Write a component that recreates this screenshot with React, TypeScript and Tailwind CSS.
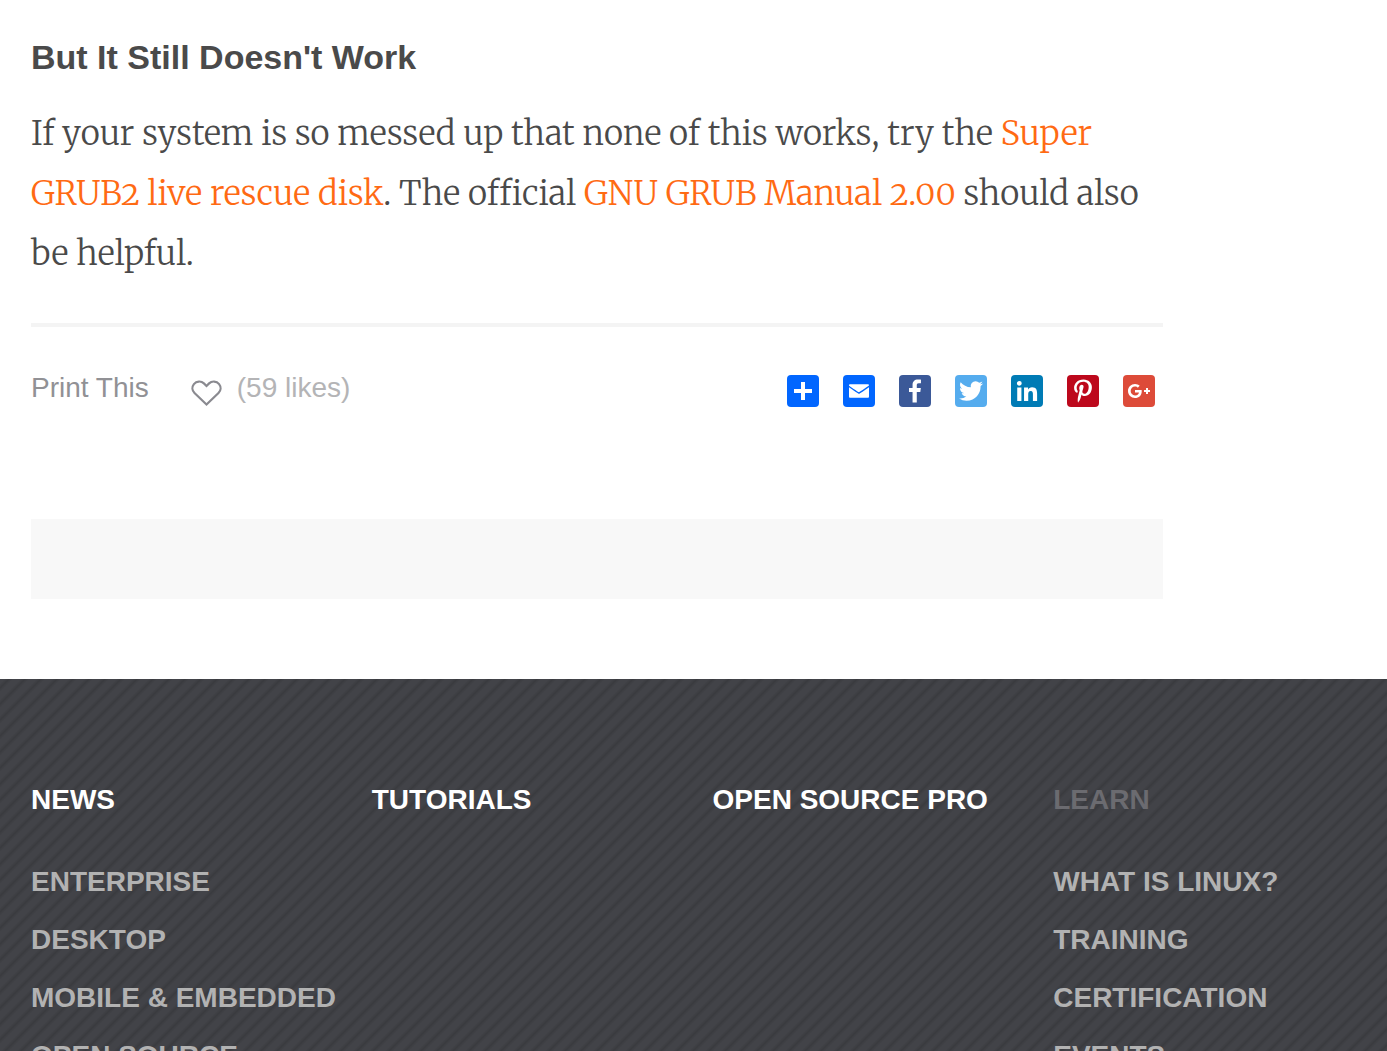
const shareLinks = [
  { label: "Share", bg: "bg-[#0166ff]", d: "M14 7h4v18h-4z M7 14h18v4H7z" },
  {
    label: "Email",
    bg: "bg-[#0166ff]",
    d: "M26 21.25v-9s-9.1 6.35-9.984 6.68C15.144 18.616 6 12.25 6 12.25v9c0 1.25.266 1.5 1.5 1.5h17c1.266 0 1.5-.22 1.5-1.5zm-.015-10.765c0-.91-.265-1.235-1.485-1.235h-17c-1.255 0-1.5.39-1.5 1.3l.015.14s9.035 6.22 10 6.56c1.02-.395 9.985-6.7 9.985-6.7l-.015-.065z",
  },
  {
    label: "Facebook",
    bg: "bg-[#3b5998]",
    d: "M17.78 27.5V17.008h3.522l.527-4.09h-4.05v-2.61c0-1.182.33-1.99 2.023-1.99h2.166V4.66c-.375-.05-1.66-.16-3.155-.16-3.123 0-5.26 1.905-5.26 5.405v3.016h-3.53v4.09h3.53V27.5h4.223z",
  },
  {
    label: "Twitter",
    bg: "bg-[#55acee]",
    d: "M28 8.557a9.913 9.913 0 0 1-2.828.775 4.93 4.93 0 0 0 2.166-2.725 9.738 9.738 0 0 1-3.13 1.194 4.92 4.92 0 0 0-3.593-1.55 4.924 4.924 0 0 0-4.794 6.049c-4.09-.21-7.72-2.17-10.15-5.15a4.942 4.942 0 0 0-.665 2.477c0 1.71.87 3.214 2.19 4.1a4.968 4.968 0 0 1-2.23-.616v.06c0 2.39 1.7 4.38 3.952 4.83-.414.115-.85.174-1.297.174-.318 0-.626-.03-.928-.086a4.935 4.935 0 0 0 4.6 3.42 9.893 9.893 0 0 1-6.114 2.107c-.398 0-.79-.023-1.175-.068a13.953 13.953 0 0 0 7.55 2.213c9.056 0 14.01-7.507 14.01-14.013 0-.213-.005-.426-.015-.637.96-.695 1.795-1.56 2.455-2.55z",
  },
  {
    label: "LinkedIn",
    bg: "bg-[#007bb5]",
    d: "M6.227 12.61h4.19v13.48h-4.19V12.61zm2.095-6.7a2.43 2.43 0 0 1 0 4.86c-1.344 0-2.428-1.09-2.428-2.43s1.084-2.43 2.428-2.43m4.72 6.7h4.02v1.84h.058c.56-1.058 1.927-2.176 3.965-2.176 4.238 0 5.02 2.792 5.02 6.42v7.395h-4.183v-6.56c0-1.564-.03-3.574-2.178-3.574-2.18 0-2.514 1.7-2.514 3.46v6.668h-4.187V12.61z",
  },
  {
    label: "Pinterest",
    bg: "bg-[#bd081c]",
    d: "M16.539 4.5c-6.277 0-9.442 4.5-9.442 8.253 0 2.272.86 4.293 2.705 5.046.303.125.574.005.662-.33.061-.231.205-.816.27-1.06.088-.331.053-.447-.191-.736-.532-.627-.873-1.439-.873-2.591 0-3.338 2.498-6.327 6.505-6.327 3.548 0 5.497 2.168 5.497 5.062 0 3.81-1.686 7.025-4.188 7.025-1.382 0-2.416-1.142-2.085-2.545.397-1.674 1.166-3.48 1.166-4.689 0-1.081-.581-1.983-1.782-1.983-1.413 0-2.548 1.462-2.548 3.419 0 1.247.421 2.091.421 2.091l-1.699 7.199c-.505 2.137-.076 4.755-.039 5.019.021.158.223.196.314.077.13-.17 1.813-2.247 2.384-4.324.162-.587.929-3.631.929-3.631.46.876 1.801 1.646 3.227 1.646 4.247 0 7.128-3.871 7.128-9.053.003-3.918-3.317-7.568-8.361-7.568z",
  },
  {
    label: "Google+",
    bg: "bg-[#dd4b39]",
    d: "M27 15h-2v-2h-2v2h-2v2h2v2h2v-2h2m-15-2v2.4h3.97c-.16 1.03-1.2 3.02-3.97 3.02-2.39 0-4.34-1.98-4.34-4.42s1.95-4.42 4.34-4.42c1.36 0 2.27.58 2.79 1.08l1.9-1.83C15.47 9.69 13.89 9 12 9c-3.87 0-7 3.13-7 7s3.13 7 7 7c4.04 0 6.72-2.84 6.72-6.84 0-.46-.05-.81-.11-1.16H12z",
  },
];

const columns = [
  {
    title: "NEWS",
    tone: "text-white",
    links: ["ENTERPRISE", "DESKTOP", "MOBILE & EMBEDDED", "OPEN SOURCE"],
  },
  { title: "TUTORIALS", tone: "text-white", links: [] },
  { title: "OPEN SOURCE PRO", tone: "text-white", links: [] },
  {
    title: "LEARN",
    tone: "text-[#6b6b70]",
    links: ["WHAT IS LINUX?", "TRAINING", "CERTIFICATION", "EVENTS"],
  },
];

function HeartIcon() {
  return (
    <svg viewBox="0 0 32 28" className="h-7 w-8" fill="none" stroke="#8a8a90" strokeWidth="2.2" aria-hidden="true">
      <path d="M16.500 25.500 4.500 14C2 11.500 1.700 7.800 3.900 5.100 6.500 1.900 11.100 1.700 13.900 4.400L16.500 7l2.600-2.600C21.900 1.700 26.500 1.900 29.100 5.100 31.300 7.800 31 11.500 28.500 14Z" />
    </svg>
  );
}

function Article() {
  return (
    <main className="max-w-[1194px] px-[31px] pt-9 pb-20">
      <h3 className="text-[34px] leading-[42px] font-bold">But It Still Doesn't Work</h3>
      <p className="mt-[26px] font-['Merriweather','Liberation_Serif',serif] text-[33px] leading-[60px] font-light oldstyle-nums">
        If your system is so messed up that none of this works, try the{" "}
        <a href="#super-grub" className="text-[#ff6a13]">Super GRUB2 live rescue disk</a>. The official{" "}
        <a href="#manual" className="text-[#ff6a13]">GNU GRUB Manual 2.00</a> should also be helpful.
      </p>
      <div className="mt-[39px] flex items-start justify-between border-t-4 border-[#f4f4f4] pt-10 text-[28px] leading-[42px]">
        <div className="flex">
          <a href="#print" className="text-[#919195]">Print This</a>
          <button type="button" aria-label="Like" className="mt-3 ml-[41px] h-7">
            <HeartIcon />
          </button>
          <span className="ml-[15px] text-[#b4b4b6]">(59 likes)</span>
        </div>
        <nav aria-label="Share this page" className="mt-2 mr-2 flex gap-6">
          {shareLinks.map((s) => (
            <a key={s.label} href="#share" aria-label={s.label} className={`block size-8 rounded-[4px] ${s.bg}`}>
              <svg viewBox="0 0 32 32" className="size-8" fill="#fff" aria-hidden="true">
                <path d={s.d} />
              </svg>
            </a>
          ))}
        </nav>
      </div>
      <div className="mt-[110px] h-20 bg-[#f8f8f8]" />
    </main>
  );
}

function Footer() {
  return (
    <footer className="flex-1 bg-[#424348] bg-[linear-gradient(135deg,#3a3b3f_0%,#424348_14%,#424348_36%,#3a3b3f_50%,#424348_64%,#424348_86%,#3a3b3f_100%)] bg-[length:16px_16px] bg-[position:9px_0px] px-[31px] pt-[100px] text-[28px] font-bold">
      <div className="grid grid-cols-4 gap-[38px] whitespace-nowrap">
        {columns.map((c) => (
          <section key={c.title}>
            <h4 className="leading-[42px]">
              {c.title === "LEARN" ? (
                <span className={c.tone}>{c.title}</span>
              ) : (
                <a href="#section" className={c.tone}>{c.title}</a>
              )}
            </h4>
            <ul className="mt-8 text-[#b2b2b2]">
              {c.links.map((l) => (
                <li key={l} className="leading-[58px]">
                  <a href="#topic">{l}</a>
                </li>
              ))}
            </ul>
          </section>
        ))}
      </div>
    </footer>
  );
}

export default function App() {
  return (
    <div className="flex h-screen flex-col overflow-x-hidden overflow-y-auto bg-white font-['Liberation_Sans',Arial,sans-serif] text-[#4a4a4a]">
      <Article />
      <Footer />
    </div>
  );
}
